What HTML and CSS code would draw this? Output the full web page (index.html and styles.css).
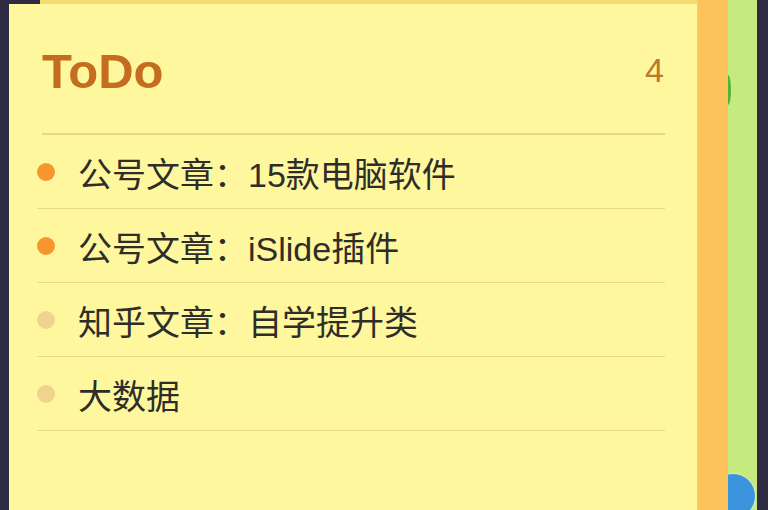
FILE: index.html
```html
<!DOCTYPE html>
<html lang="zh-CN">
<head>
<meta charset="utf-8">
<title>ToDo</title>
<link rel="stylesheet" href="styles.css">
</head>
<body>
<div class="screen">
  <div class="gutter-left"></div>
  <div class="stack">
    <div class="behind"></div>
    <section class="card">
      <header class="card-head">
        <h1 class="title">ToDo</h1>
        <span class="count">4</span>
      </header>
      <ul class="list">
        <li class="item"><span class="dot"></span><span class="label">公号文章：15款电脑软件</span></li>
        <li class="item"><span class="dot"></span><span class="label">公号文章：iSlide插件</span></li>
        <li class="item"><span class="dot dot-faded"></span><span class="label">知乎文章：自学提升类</span></li>
        <li class="item"><span class="dot dot-faded"></span><span class="label">大数据</span></li>
      </ul>
    </section>
  </div>
  <div class="strip-orange"></div>
  <div class="strip-green">
    <span class="green-blob"></span>
    <span class="blue-circle"></span>
  </div>
  <div class="gutter-right"></div>
</div>
</body>
</html>
```
FILE: styles.css
```css
html, body {
  margin: 0;
  padding: 0;
}
body {
  width: 768px;
  height: 510px;
  overflow: hidden;
  background: #2e2b42;
  font-family: "Liberation Sans", "Noto Sans CJK SC", sans-serif;
}
.screen {
  display: flex;
  height: 510px;
}
.gutter-left {
  width: 9px;
  flex: none;
  background: #2e2b42;
}
.stack {
  width: 688px;
  flex: none;
  display: flex;
  flex-direction: column;
}
.behind {
  height: 4px;
  margin-left: 31px;
  background: #f3dc76;
  flex: none;
}
.card {
  flex: 1;
  background: #fef79d;
  border-left: 1px solid #fffbc8;
  padding: 0 32px 0 27px;
}
.card-head {
  height: 129px;
  display: flex;
  align-items: center;
  justify-content: space-between;
  margin-left: 5px;
  border-bottom: 2px solid #e6d68a;
}
.title {
  margin: 4px 0 0 0;
  font-size: 49px;
  font-weight: bold;
  color: #c46d1f;
}
.count {
  font-size: 34px;
  color: #c0772c;
  margin-top: 4px;
  margin-right: 1px;
}
.list {
  list-style: none;
  margin: 0;
  padding: 0;
}
.item {
  height: 73px;
  display: flex;
  align-items: center;
  border-bottom: 1.5px solid #e8d98b;
}
.dot {
  width: 18px;
  height: 18px;
  border-radius: 50%;
  background: #f7952e;
  flex: none;
  margin-right: 23px;
  margin-top: 1px;
}
.dot-faded {
  background: #f0d38f;
}
.label {
  font-size: 34px;
  color: #2e2d28;
  margin-top: 1px;
}
.strip-orange {
  width: 31px;
  flex: none;
  background: #fcc35a;
  border-left: 1px solid #f3d071;
  box-sizing: border-box;
}
.strip-green {
  width: 29px;
  flex: none;
  background: #c5ea7e;
  position: relative;
  overflow: hidden;
}
.green-blob {
  position: absolute;
  left: -3px;
  top: 75px;
  width: 6px;
  height: 30px;
  border-radius: 50%;
  background: #4fb33c;
}
.blue-circle {
  position: absolute;
  left: -18px;
  top: 473px;
  width: 44px;
  height: 44px;
  border-radius: 50%;
  background: #3b93dc;
  border: 1px solid #dcefd0;
}
.gutter-right {
  flex: 1;
  background: #2e2b42;
}
```
